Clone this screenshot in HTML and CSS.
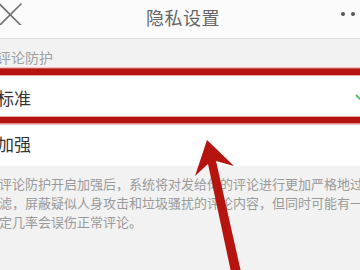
FILE: index.html
```html
<!DOCTYPE html>
<html lang="zh">
<head>
<meta charset="utf-8">
<title>隐私设置</title>
<link rel="stylesheet" href="styles.css">
</head>
<body>
<div class="page">
  <header class="topbar">
    <div class="close">
      <svg width="24" height="24" viewBox="0 0 24 24"><path d="M-1 2.5 L21.5 25 M21.5 2.5 L-1 25" stroke="#6f6f6f" stroke-width="1.6" fill="none"/></svg>
    </div>
    <h1 class="title">隐私设置</h1>
    <div class="more"><span class="dot"></span><span class="dot"></span></div>
  </header>
  <div class="section-label">评论防护</div>
  <div class="list">
    <div class="row row-first"><span class="row-text">标准</span>
      <svg class="check" width="14" height="12" viewBox="0 0 14 12"><path d="M1 3 L6 8 L13 1" stroke="#4cc25a" stroke-width="1.8" fill="none"/></svg>
    </div>
    <div class="row row-second"><span class="row-text">加强</span></div>
  </div>
  <p class="desc">评论防护开启加强后，系统将对发给你的评论进行更加严格地过滤，屏蔽疑似人身攻击和垃圾骚扰的评论内容，但同时可能有一定几率会误伤正常评论。</p>
  <svg class="annot" width="360" height="270" viewBox="0 0 360 270">
    <rect x="0" y="68" width="360" height="7" fill="#b5140f"/>
    <rect x="0" y="67.5" width="360" height="1" fill="#e08a86"/>
    <rect x="0" y="75" width="360" height="1" fill="#e9a8a5"/>
    <rect x="0" y="117" width="360" height="6.5" fill="#b5140f"/>
    <rect x="0" y="116" width="360" height="1" fill="#e9a8a5"/>
    <rect x="0" y="123.5" width="360" height="1" fill="#e08a86"/>
    <polygon points="207,140 234,166 216,161 241,272 231,272 208,164 195,176" fill="#b5140f"/>
  </svg>
</div>
</body>
</html>
```
FILE: styles.css
```css
html, body {
  margin: 0;
  padding: 0;
}
body {
  width: 360px;
  height: 270px;
  overflow: hidden;
  background: #f2f2f2;
  font-family: "Noto Sans CJK SC", "Noto Sans", sans-serif;
}
.page {
  position: relative;
  width: 360px;
  height: 270px;
  overflow: hidden;
}
.topbar {
  height: 38px;
  background: #fbfbfb;
  border-bottom: 1px solid #dcdcdc;
  display: grid;
  grid-template-columns: 1fr auto 1fr;
  align-items: center;
}
.close {
  height: 38px;
  display: flex;
  align-items: flex-start;
}
.close svg {
  display: block;
  margin-top: 1px;
}
.title {
  margin: 0;
  padding-left: 6px;
  font-size: 18px;
  font-weight: normal;
  color: #666;
  line-height: 20px;
  margin-top: -4px;
  letter-spacing: 0.5px;
}
.more {
  display: flex;
  justify-content: flex-end;
  gap: 6.5px;
  padding-right: 5px;
  margin-top: -10px;
}
.dot {
  width: 4px;
  height: 4px;
  border-radius: 50%;
  background: #555;
}
.section-label {
  height: 28px;
  box-sizing: border-box;
  padding-top: 11px;
  padding-left: 0;
  margin-left: -3px;
  font-size: 14px;
  line-height: 14px;
  color: #a0a0a0;
}
.list {
  background: #fff;
}
.row {
  display: flex;
  align-items: center;
  justify-content: space-between;
  position: relative;
}
.row-first {
  height: 54px;
  padding-top: 6px;
  box-sizing: border-box;
}
.row-second {
  height: 45px;
}
.row-text {
  font-size: 17px;
  line-height: 17px;
  color: #333;
  margin-left: -3px;
}
.check {
  margin-right: -9px;
  margin-top: 2px;
}
.desc {
  margin: 0 0 0 -1px;
  width: 366px;
  padding-top: 8px;
  font-size: 13px;
  line-height: 19px;
  color: #9a9a9a;
}
.annot {
  position: absolute;
  left: 0;
  top: 0;
}
```
